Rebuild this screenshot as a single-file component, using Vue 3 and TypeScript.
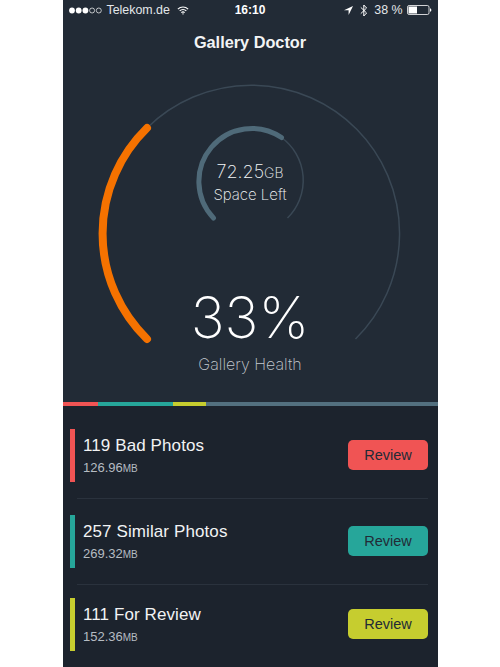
<script setup lang="ts">
interface Row { title: string; size: string; color: string }
const rows: Row[] = [
  { title: '119 Bad Photos', size: '126.96', color: '#f05454' },
  { title: '257 Similar Photos', size: '269.32', color: '#26a69a' },
  { title: '111 For Review', size: '152.36', color: '#c6cd2f' },
]
const segments = [
  { w: 35, c: '#f05454' },
  { w: 75, c: '#26a69a' },
  { w: 33, c: '#c6cd2f' },
  { w: 232, c: '#53707f' },
]
</script>

<template>
  <div class="phone">
    <section class="hero">
      <div class="status">
        <div class="side">
          <svg width="33" height="7" viewBox="0 0 33 7">
            <circle cx="3" cy="3.500" r="2.900" fill="#fff" />
            <circle cx="9.700" cy="3.500" r="2.900" fill="#fff" />
            <circle cx="16.400" cy="3.500" r="2.900" fill="#fff" />
            <circle cx="23.100" cy="3.500" r="2.500" fill="none" stroke="#fff" stroke-width=".7" />
            <circle cx="29.800" cy="3.500" r="2.500" fill="none" stroke="#fff" stroke-width=".7" />
          </svg>
          <span class="carrier">Telekom.de</span>
          <svg class="wifi" width="12" height="9" viewBox="0 0 13 10" fill="none" stroke="#fff" stroke-width="1.300">
            <path d="M.8 3.400a8.200 8.200 0 0 1 11.400 0" />
            <path d="M2.800 5.500a5.300 5.300 0 0 1 7.400 0" />
            <path d="M4.700 7.400a2.600 2.600 0 0 1 3.600 0" />
            <path d="M6.500 9.600 5.500 8.500a1.400 1.400 0 0 1 2 0z" fill="#fff" stroke="none" />
          </svg>
        </div>
        <span class="time">16:10</span>
        <div class="side right">
          <svg class="arrow" width="9" height="9" viewBox="0 0 9 9"><path d="M9 0 0 4.200h4.600V9z" fill="#fff" /></svg>
          <svg class="bt" width="8" height="13" viewBox="0 0 8 13" fill="none" stroke="#fff" stroke-width="1"><path d="M.8 3.400 6.600 9 3.800 12V1l2.800 3L.8 9.600" /></svg>
          <span class="carrier">38 %</span>
          <svg width="25" height="10" viewBox="0 0 25 10">
            <rect x=".5" y=".5" width="21.500" height="9" rx="1.600" fill="none" stroke="#fff" stroke-width=".8" />
            <rect x="1.500" y="1.500" width="8.500" height="7" fill="#fff" />
            <path d="M23 3.200c.9.2 1.300.9 1.300 1.800s-.4 1.600-1.300 1.800z" fill="#fff" />
          </svg>
        </div>
      </div>
      <h1 class="title">Gallery Doctor</h1>
      <div class="gauge">
        <svg class="rings" width="375" height="340" viewBox="0 0 375 340" fill="none">
          <path d="M84 75A147.500 147.500 0 1 1 292.500 286" stroke="#3a4855" stroke-width="1.500" />
          <path d="M84 75A147.500 147.500 0 0 0 84 286" stroke="#f57200" stroke-width="8" stroke-linecap="round" />
          <path d="M218.500 84.500A53 53 0 0 1 224.500 165" stroke="#3a4855" stroke-width="1.500" />
          <path d="M150.500 165A53 53 0 0 1 218.500 84.500" stroke="#4f6a79" stroke-width="5" stroke-linecap="round" />
        </svg>
        <div class="inner">
          <div class="space"><span>72.25</span><small>GB</small></div>
          <div class="space-label">Space Left</div>
        </div>
        <div class="pct">33%</div>
        <div class="health">Gallery Health</div>
      </div>
      <div class="bar">
        <i v-for="s in segments" :key="s.c" :style="{ width: s.w + 'px', background: s.c }"></i>
      </div>
    </section>
    <section class="list">
      <div v-for="r in rows" :key="r.title" class="row">
        <span class="mark" :style="{ background: r.color }"></span>
        <div class="info">
          <div class="name">{{ r.title }}</div>
          <div class="size">{{ r.size }}<small>MB</small></div>
        </div>
        <button class="review" :style="{ background: r.color }">Review</button>
      </div>
    </section>
  </div>
</template>

<style>
html, body { margin: 0; background: #fff; }
</style>

<style scoped>
.phone {
  width: 375px;
  height: 667px;
  margin-left: 62.5px;
  overflow: hidden;
  background: #1c232d;
  font-family: "Liberation Sans", Arial, sans-serif;
  color: #fff;
}
.hero { height: 406px; background: #222b36; display: flex; flex-direction: column; }
.status {
  height: 20px;
  padding: 0 6px;
  display: grid;
  grid-template-columns: 1fr auto 1fr;
  align-items: center;
  font-size: 12px;
}
.side { display: flex; align-items: center; gap: 5px; color: #e4e7ea; }
.side.right { justify-content: flex-end; gap: 4px; }
.carrier { font-size: 12.400px; }
.wifi { margin-left: 2px; }
.arrow { margin-right: 3px; }
.bt { margin-right: 2px; }
.time { font-weight: 700; font-size: 12px; }
.title { margin: 12px 0 0; font-size: 16.300px; line-height: 21px; font-weight: 700; text-align: center; color: #f3f4f5; }
.gauge { position: relative; flex: 1; display: flex; flex-direction: column; align-items: center; }
.rings { position: absolute; left: 0; top: 0; }
.inner { position: relative; margin-top: 108px; text-align: center; color: #f4f6f7; font-family: Inter, sans-serif; font-weight: 250; }
.space { font-size: 18px; line-height: 22px; }
.space small { font-size: 14px; }
.space-label { font-size: 15px; line-height: 21px; }
.pct { position: relative; margin-top: 78px; font-family: Inter, sans-serif; font-weight: 160; font-size: 57px; line-height: 70px; }
.health { position: relative; font-family: Inter, sans-serif; font-weight: 200; font-size: 16px; line-height: 22px; color: #c4cacf; }
.bar { display: flex; height: 4px; flex: none; }
.bar i { display: block; height: 4px; }
.list { display: flex; flex-direction: column; padding: 23px 9.500px 0 7.500px; }
.row { display: flex; align-items: center; height: 53px; position: relative; }
.row:nth-child(1) { margin-bottom: 33px; }
.row:nth-child(2) { margin-bottom: 30px; }
.row:not(:last-child)::after {
  content: "";
  position: absolute;
  left: 7px;
  right: 0;
  top: 69px;
  height: 1px;
  background: #2a323d;
}
.mark { width: 5px; height: 53px; flex: none; }
.info { flex: 1; align-self: flex-start; padding: 6px 0 0 8px; }
.name { font-size: 17px; line-height: 22px; color: #f2f3f4; letter-spacing: .1px; }
.size { margin-top: 3px; font-size: 13px; line-height: 16px; color: #b6bcc2; }
.size small { font-size: 10px; }
.review {
  width: 80px;
  height: 30px;
  margin-top: -1px;
  border: 0;
  border-radius: 5px;
  padding: 0;
  font: 14.500px "Liberation Sans", Arial, sans-serif;
  color: #222b36;
}
</style>
